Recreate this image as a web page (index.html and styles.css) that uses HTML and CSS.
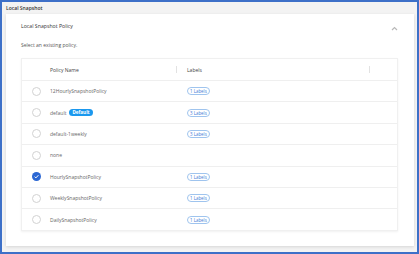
FILE: index.html
```html
<html>

<head>
    <meta charset="UTF-8">
    <title>Local Snapshot</title>
    <link rel="stylesheet" href="styles.css">
</head>

<body>
    <div class="frame">
        <div class="page-title">Local Snapshot</div>

        <div class="card">
            <div class="card-head">
                <span class="card-title">Local Snapshot Policy</span>
                <svg class="chevron" width="7" height="5" viewBox="0 0 7 5">
                    <polyline points="1,4 3.5,1.5 6,4" fill="none" stroke="#b9b9b9" stroke-width="1.2" />
                </svg>
            </div>
            <p class="hint">Select an existing policy.</p>

            <div class="policy-table">
                <div class="table-row table-header">
                    <span class="cell-radio"></span>
                    <span class="th-name">Policy Name</span>
                    <span class="sep"></span>
                    <span class="th-labels">Labels</span>
                    <span class="sep"></span>
                </div>

                <div class="table-row">
                    <span class="cell-radio"><span class="radio"></span></span>
                    <span class="cell-name">12HourlySnapshotPolicy</span>
                    <span class="labels">1 Labels</span>
                </div>
                <div class="table-row">
                    <span class="cell-radio"><span class="radio"></span></span>
                    <span class="cell-name">default <span class="badge">Default</span></span>
                    <span class="labels">3 Labels</span>
                </div>
                <div class="table-row">
                    <span class="cell-radio"><span class="radio"></span></span>
                    <span class="cell-name">default-1weekly</span>
                    <span class="labels">3 Labels</span>
                </div>
                <div class="table-row">
                    <span class="cell-radio"><span class="radio"></span></span>
                    <span class="cell-name">none</span>
                </div>
                <div class="table-row">
                    <span class="cell-radio">
                        <span class="radio checked">
                            <svg width="9" height="9" viewBox="0 0 9 9">
                                <polyline points="2.6,4.7 3.9,5.9 6.4,3.2" fill="none" stroke="#fff" stroke-width="1" />
                            </svg>
                        </span>
                    </span>
                    <span class="cell-name">HourlySnapshotPolicy</span>
                    <span class="labels">1 Labels</span>
                </div>
                <div class="table-row">
                    <span class="cell-radio"><span class="radio"></span></span>
                    <span class="cell-name">WeeklySnapshotPolicy</span>
                    <span class="labels">1 Labels</span>
                </div>
                <div class="table-row">
                    <span class="cell-radio"><span class="radio"></span></span>
                    <span class="cell-name">DailySnapshotPolicy</span>
                    <span class="labels">1 Labels</span>
                </div>
            </div>
        </div>
    </div>
</body>

</html>
```

FILE: styles.css
```css
body {
    font-family: "Open Sans", "Noto Sans", sans-serif;
    margin: 0;
}

html {
    box-sizing: border-box;
}

*,
*:before,
*:after {
    box-sizing: inherit;
}

.frame {
    width: 419px;
    height: 254px;
    border: 2px solid #3d70c8;
    background-color: #f3f3f3;
    display: flex;
    flex-direction: column;
}

.page-title {
    height: 12px;
    padding-left: 4px;
    font-size: 5px;
    font-weight: 600;
    color: #333;
    display: flex;
    align-items: center;
}

.card {
    margin: 0 3px 0 4px;
    padding: 0 16px 15px 15px;
    background-color: white;
    box-shadow: 0 1px 3px rgba(0, 0, 0, 0.12);
}

.card-head {
    height: 24px;
    display: flex;
    align-items: center;
    justify-content: space-between;
}

.card-title {
    font-size: 5.2px;
    color: #333;
}

.chevron {
    margin-right: 0;
    margin-top: 4px;
}

.hint {
    margin: 2px 0 0 0;
    height: 10px;
    line-height: 10px;
    font-size: 5px;
    color: #555;
}

.policy-table {
    margin-top: 8px;
    border: 1px solid #f0f0f0;
    box-shadow: 0 1px 2px rgba(0, 0, 0, 0.06);
}

.table-row {
    height: 21.4px;
    display: flex;
    align-items: center;
    border-top: 1px solid #efefef;
    font-size: 5px;
    color: #666;
}

.table-header {
    height: 21px;
    border-top: none;
    color: #444;
}

.cell-radio {
    width: 28px;
    display: flex;
    justify-content: center;
}

.th-name {
    width: 126px;
}

.sep {
    width: 1px;
    height: 7px;
    background-color: #e2e2e2;
    margin-right: 10px;
}

.th-labels {
    width: 182px;
}

.cell-name {
    width: 137px;
    display: flex;
    align-items: center;
}

.radio {
    width: 9px;
    height: 9px;
    border: 1px solid #d2d2d2;
    border-radius: 50%;
    background-color: white;
}

.radio.checked {
    border: none;
    background-color: #2b67d3;
    display: flex;
}

.badge {
    margin-left: 3px;
    padding: 0 3px;
    height: 7px;
    line-height: 7px;
    border-radius: 4px;
    background-color: #1b98ee;
    color: white;
    font-weight: 700;
    font-size: 4.6px;
}

.labels {
    height: 8px;
    line-height: 6px;
    padding: 0 2px;
    border: 1px solid #9fc4ee;
    border-radius: 4px;
    color: #3a7ad6;
    font-size: 4.4px;
}
```
